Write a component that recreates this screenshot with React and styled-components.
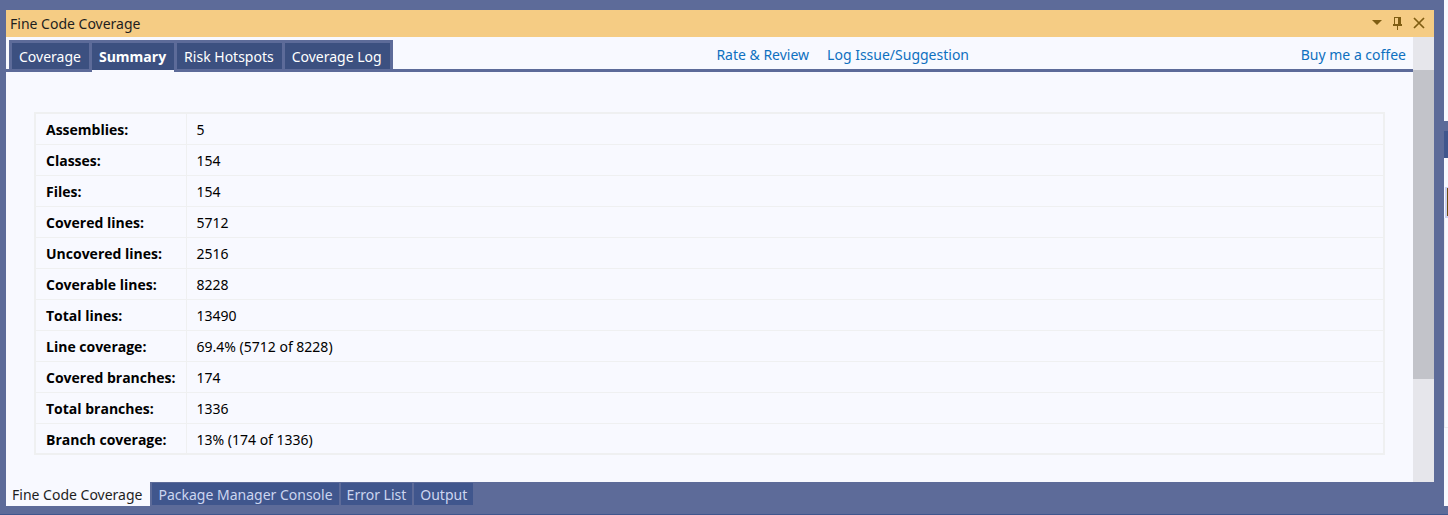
import React, { useState } from "react";
import styled, { createGlobalStyle } from "styled-components";

const GlobalStyle = createGlobalStyle`
  * { box-sizing: border-box; }
  body {
    margin: 0;
    background: #5d6b99;
    font: 14px/20px "Noto Sans", "Open Sans", sans-serif;
    color: #1e1e1e;
  }
  button { font: inherit; border: 0; margin: 0; cursor: pointer; white-space: nowrap; }
`;

const Shell = styled.div`
  display: flex;
  gap: 10px;
  min-height: 100vh;
  padding-left: 6px;
  border-bottom: 1px solid #40568d;
`;

const Dock = styled.main`
  flex: 1;
  min-width: 0;
  display: flex;
  flex-direction: column;
  padding: 10px 0 8px;
`;

const TitleBar = styled.header`
  display: flex;
  align-items: center;
  justify-content: space-between;
  height: 27px;
  padding: 0 8px 0 4px;
  background: #f5cc84;
`;

const Title = styled.h1`
  margin: 0;
  font-size: 14px;
  font-weight: 400;
`;

const TitleActions = styled.div`
  display: flex;
  gap: 7px;
`;

const IconButton = styled.button`
  display: flex;
  padding: 0;
  background: none;
  color: #7f5d12;
`;

const Body = styled.div`
  flex: 1;
  display: flex;
  background: #f8f9ff;
`;

const Page = styled.div`
  flex: 1;
  min-width: 0;
`;

const Toolbar = styled.div`
  display: flex;
  justify-content: space-between;
  padding: 3px 7px 0 3px;
  background: linear-gradient(#5d6b99, #5d6b99) bottom / 100% 3px no-repeat;
`;

const Tabs = styled.div`
  display: flex;
  gap: 3px;
  padding: 3px 3px 0;
  background: #5d6b99;
`;

const Tab = styled.button`
  display: flex;
  height: 29px;
  padding: 4px 8px 0 7px;
  background: #3c5080;
  color: #fff;
  font-weight: ${(p) => (p.$active ? 700 : 400)};
  font-family: ${(p) => (p.$active ? '"Open Sans", sans-serif' : "inherit")};
  border-bottom: ${(p) => (p.$active ? "2px solid #f8f9ff" : "3px solid #5d6b99")};
`;

const Links = styled.nav`
  display: flex;
  gap: 18px;
  padding-top: 5px;
`;

const FeedbackLinks = styled(Links)`
  padding-right: 8px;
`;

const Link = styled.a`
  color: #0e70c0;
  text-decoration: none;
  white-space: nowrap;
`;

const Content = styled.section`
  padding: 40px 28px 27px;
`;

const Table = styled.table`
  width: 100%;
  border-collapse: collapse;
  border: 2px solid #eff0f1;
  color: #000;
`;

const cell = `
  height: 31px;
  padding: 6px 10px 4px;
  border: 1px solid #eff0f1;
  text-align: left;
  tr:last-child > & {
    height: 30px;
    padding-bottom: 3px;
  }
`;

const Label = styled.th`
  ${cell}
  width: 151px;
  font-family: "Open Sans", sans-serif;
  font-weight: 700;
  white-space: nowrap;
`;

const Value = styled.td`
  ${cell}
`;

const Scrollbar = styled.div`
  display: flex;
  flex-direction: column;
  width: 21px;
  background: #e6e6eb;
`;

const ScrollSpace = styled.div`
  flex: ${(p) => p.$share} 0 0;
`;

const Thumb = styled(ScrollSpace)`
  background: #c2c3c9;
`;

const DockTabs = styled.div`
  display: flex;
  align-items: flex-start;
  gap: 2px;
`;

const DockTab = styled.button`
  display: flex;
  height: ${(p) => (p.$active ? 24 : 22)}px;
  margin-top: ${(p) => (p.$active ? 0 : 1)}px;
  padding: ${(p) => (p.$active ? "3px 8px 0 6px" : "2px 6px 0")};
  background: ${(p) => (p.$active ? "#f8f9ff" : "#40568d")};
  color: ${(p) => (p.$active ? "#1e1e1e" : "#ccd5f0")};
`;

const Neighbour = styled.aside`
  display: flex;
  flex-direction: column;
  width: 4px;
  padding-bottom: 8px;
`;

const NeighbourDocument = styled.div`
  height: 121px;
  background: #f8f9ff;
`;

const NeighbourHeader = styled.div`
  height: 27px;
  margin-top: 10px;
  background: #40568d;
`;

const NeighbourBody = styled.div`
  flex: 1;
  display: flex;
  flex-direction: column;
  padding-top: 29px;
  background: #f8f9ff;
`;

const NeighbourButton = styled.div`
  height: 31px;
  margin-left: 1px;
  border: solid #ccd0ee;
  border-width: 1px 0 2px 2px;
  background: #6b4e12;
`;

const NeighbourList = styled.div`
  height: 210px;
  border: solid #eaeaf0;
  border-width: 0 0 1px 1px;
`;

const tabs = ["Coverage", "Summary", "Risk Hotspots", "Coverage Log"];
const dockTabs = ["Fine Code Coverage", "Package Manager Console", "Error List", "Output"];
const summary = [
  ["Assemblies:", "5"],
  ["Classes:", "154"],
  ["Files:", "154"],
  ["Covered lines:", "5712"],
  ["Uncovered lines:", "2516"],
  ["Coverable lines:", "8228"],
  ["Total lines:", "13490"],
  ["Line coverage:", "69.4% (5712 of 8228)"],
  ["Covered branches:", "174"],
  ["Total branches:", "1336"],
  ["Branch coverage:", "13% (174 of 1336)"],
];

export default function App() {
  const [tab, setTab] = useState("Summary");
  const [dockTab, setDockTab] = useState("Fine Code Coverage");
  return (
    <>
      <GlobalStyle />
      <Shell>
        <Dock>
          <TitleBar>
            <Title>Fine Code Coverage</Title>
            <TitleActions>
              <IconButton aria-label="Window position">
                <svg width="14" height="15" viewBox="0 0 14 15" fill="currentColor">
                  <path d="M2 4h10L7 9z" />
                </svg>
              </IconButton>
              <IconButton aria-label="Auto hide">
                <svg width="14" height="15" viewBox="0 0 14 15" fill="currentColor" shapeRendering="crispEdges">
                  <path d="M3 1h7v7h1v2H7v4H6v-4H2V8h1zM4 2v6h3V2z" fillRule="evenodd" />
                </svg>
              </IconButton>
              <IconButton aria-label="Close">
                <svg width="14" height="15" viewBox="0 0 14 15" fill="none" stroke="currentColor" strokeWidth="1.7">
                  <path d="M2 2l10 10M12 2L2 12" />
                </svg>
              </IconButton>
            </TitleActions>
          </TitleBar>
          <Body>
            <Page>
              <Toolbar>
                <Tabs role="tablist">
                  {tabs.map((name) => (
                    <Tab key={name} role="tab" aria-selected={tab === name} $active={tab === name} onClick={() => setTab(name)}>
                      {name}
                    </Tab>
                  ))}
                </Tabs>
                <FeedbackLinks>
                  <Link href="#review">Rate &amp; Review</Link>
                  <Link href="#issue">Log Issue/Suggestion</Link>
                </FeedbackLinks>
                <Links>
                  <Link href="#coffee">Buy me a coffee</Link>
                </Links>
              </Toolbar>
              <Content>
                <Table>
                  <tbody>
                    {summary.map(([label, value]) => (
                      <tr key={label}>
                        <Label scope="row">{label}</Label>
                        <Value>{value}</Value>
                      </tr>
                    ))}
                  </tbody>
                </Table>
              </Content>
            </Page>
            <Scrollbar>
              <ScrollSpace $share={33} />
              <Thumb $share={309} />
              <ScrollSpace $share={103} />
            </Scrollbar>
          </Body>
          <DockTabs role="tablist">
            {dockTabs.map((name) => (
              <DockTab key={name} role="tab" aria-selected={dockTab === name} $active={dockTab === name} onClick={() => setDockTab(name)}>
                {name}
              </DockTab>
            ))}
          </DockTabs>
        </Dock>
        <Neighbour>
          <NeighbourDocument />
          <NeighbourHeader />
          <NeighbourBody>
            <NeighbourButton />
            <NeighbourList />
          </NeighbourBody>
        </Neighbour>
      </Shell>
    </>
  );
}
